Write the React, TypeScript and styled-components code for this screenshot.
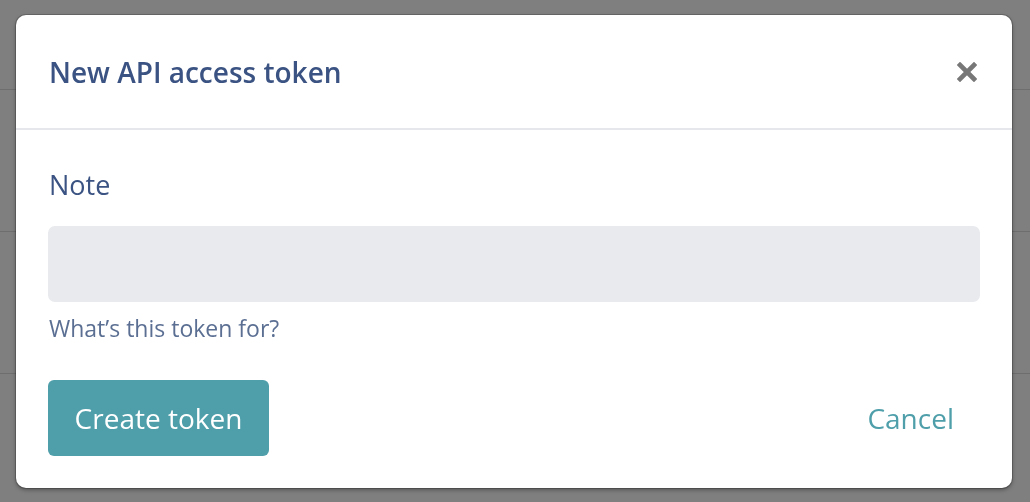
import styled, { createGlobalStyle } from 'styled-components';

const GlobalStyle = createGlobalStyle`
  html, body {
    margin: 0;
    padding: 0;
    background: #7f7f7f;
    font-family: "Open Sans", "Noto Sans", sans-serif;
  }
  * {
    box-sizing: border-box;
  }
`;

function CloseIcon() {
  return (
    <svg width='20' height='20' viewBox='0 0 20 20' aria-hidden='true'>
      <path
        d='M3 3 L17 17 M17 3 L3 17'
        stroke='#777777'
        strokeWidth='4.6'
        strokeLinecap='square'
      />
    </svg>
  );
}

export default function App() {
  return (
    <>
      <GlobalStyle />
      <Backdrop>
        <BackRow $height={90} />
        <BackRow $height={142} />
        <BackRow $height={142} />
        <BackRow $height={128} $last />
      </Backdrop>
      <Overlay>
        <Modal role='dialog' aria-labelledby='token-title'>
          <Header>
            <Title id='token-title'>New API access token</Title>
            <CloseButton type='button' aria-label='Close'>
              <CloseIcon />
            </CloseButton>
          </Header>
          <Body>
            <Label htmlFor='token-note'>Note</Label>
            <Input id='token-note' type='text' />
            <Hint>What’s this token for?</Hint>
            <Actions>
              <PrimaryButton type='button'>Create token</PrimaryButton>
              <LinkButton type='button'>Cancel</LinkButton>
            </Actions>
          </Body>
        </Modal>
      </Overlay>
    </>
  );
}

const Backdrop = styled.div`
  display: flex;
  flex-direction: column;
  height: 502px;
  overflow: hidden;
`;

const BackRow = styled.div<{ $height: number; $last?: boolean }>`
  flex: 0 0 ${(p) => p.$height}px;
  border-bottom: ${(p) => (p.$last ? 'none' : '1px solid #6e6e6e')};
`;

const Overlay = styled.div`
  position: fixed;
  inset: 0;
  display: flex;
  align-items: center;
  justify-content: center;
`;

const Modal = styled.div`
  width: 996px;
  height: 473px;
  margin-left: -2px;
  background: #ffffff;
  border-radius: 10px;
  box-shadow: 0 0 0 1px rgba(0, 0, 0, 0.18), 0 2px 4px rgba(0, 0, 0, 0.35);
  display: flex;
  flex-direction: column;
  overflow: hidden;
`;

const Header = styled.div`
  flex: 0 0 115px;
  display: flex;
  align-items: center;
  justify-content: space-between;
  padding: 2px 35px 0 33px;
  border-bottom: 2px solid #e6e7ed;
`;

const Title = styled.h2`
  margin: 0;
  font-size: 28px;
  font-weight: 600;
  color: #3b5382;
`;

const CloseButton = styled.button`
  border: none;
  background: none;
  padding: 0;
  display: flex;
  cursor: pointer;
`;

const Body = styled.div`
  display: flex;
  flex-direction: column;
  padding: 38px 32px 0 32px;
`;

const Label = styled.label`
  font-size: 27px;
  line-height: 34px;
  color: #3b5382;
  padding-left: 1px;
`;

const Input = styled.input`
  margin-top: 24px;
  height: 76px;
  width: 100%;
  border: none;
  border-radius: 7px;
  background: #e8eaee;
  font-family: inherit;
  font-size: 24px;
  padding: 0 18px;
  outline: none;
`;

const Hint = styled.div`
  margin-top: 12px;
  font-size: 23px;
  line-height: 28px;
  color: #5b6f93;
  padding-left: 1px;
`;

const Actions = styled.div`
  margin-top: 38px;
  display: flex;
  align-items: center;
  justify-content: space-between;
`;

const PrimaryButton = styled.button`
  height: 76px;
  width: 221px;
  border: none;
  border-radius: 6px;
  background: #4f9faa;
  color: #ffffff;
  font-family: inherit;
  font-size: 28px;
  cursor: pointer;
`;

const LinkButton = styled.button`
  border: none;
  background: none;
  padding: 0 26px 0 0;
  color: #4f9faa;
  font-family: inherit;
  font-size: 28px;
  cursor: pointer;
`;
